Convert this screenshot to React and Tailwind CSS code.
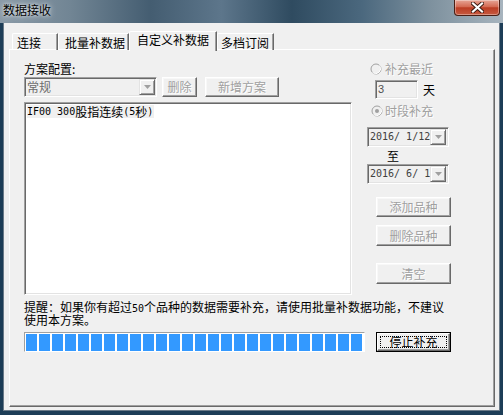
import React from 'react';

const raised =
  'bg-[#f0f0f0] border border-t-white border-l-white border-r-[#696969] border-b-[#696969] shadow-[inset_-1px_-1px_0_#a0a0a0,inset_1px_1px_0_#f8f8f8]';
const sunken =
  'border border-t-[#a0a0a0] border-l-[#a0a0a0] border-r-white border-b-white shadow-[inset_1px_1px_0_#696969,inset_-1px_-1px_0_#e3e3e3]';
const disabledText = 'text-[#a0a0a0] [text-shadow:1px_1px_0_#ffffff]';
const mono = "font-['DejaVu_Sans_Mono',monospace] text-[10px] leading-[12px]";

function DropArrow() {
  return (
    <div className="w-[16px] h-[16px] flex items-center justify-center bg-[#f0f0f0] border border-t-[#e3e3e3] border-l-[#e3e3e3] border-r-[#696969] border-b-[#696969] shadow-[inset_1px_1px_0_#ffffff,inset_-1px_-1px_0_#a0a0a0]">
      <svg width="7" height="4" viewBox="0 0 7 4">
        <path d="M0 0h7L3.5 4z" fill="#a0a0a0" />
      </svg>
    </div>
  );
}

function Radio({ checked }) {
  return (
    <svg width="12" height="12" viewBox="0 0 12 12" className="shrink-0">
      <circle cx="6" cy="6" r="5" fill="#f0f0f0" stroke="#a0a0a0" />
      <path d="M2.6 9.6 A5 5 0 0 0 9.6 2.6" fill="none" stroke="#ffffff" />
      {checked && <circle cx="6" cy="6" r="2" fill="#a0a0a0" />}
    </svg>
  );
}

function Tab({ w, pl, selected, children }) {
  if (selected) {
    return (
      <div
        className={`h-[20px] mb-[-1px] relative z-10 bg-[#f0f0f0] border-t border-l border-t-white border-l-white border-r border-r-[#696969] shadow-[inset_-1px_0_0_#a0a0a0] rounded-tl-[2px] text-[12px] leading-[14px] pt-[1px] ${w} ${pl}`}
      >
        {children}
      </div>
    );
  }
  return (
    <div
      className={`h-[17px] border-t border-l border-t-white border-l-white border-r border-r-[#696969] shadow-[inset_-1px_0_0_#a0a0a0] rounded-tl-[2px] text-[12px] leading-[14px] pt-[2px] ${w} ${pl}`}
    >
      {children}
    </div>
  );
}

function DatePicker({ value }) {
  return (
    <div className={`w-[82px] h-[20px] bg-[#f0f0f0] flex items-center justify-between pl-[2px] pr-[2px] ${sunken}`}>
      <span className={`${mono} text-[#404040] whitespace-pre`}>{value}</span>
      <DropArrow />
    </div>
  );
}

export default function App() {
  const segments = Array.from({ length: 26 });
  return (
    <div className="w-[503px] h-[415px] overflow-hidden flex flex-col bg-[#1d3d57] text-black font-['Noto_Sans_CJK_SC','Noto_Sans',sans-serif]">
      {/* Title bar */}
      <div className="h-[23px] shrink-0 flex items-start justify-between bg-[linear-gradient(90deg,#8a9aa7_0%,#718594_14%,#445d71_30%,#5d768b_44%,#2f4b60_58%,#4b687e_72%,#7f929f_86%,#a7b4be_100%)]">
        <span className="pl-[3px] pt-[3px] text-[12px] leading-[14px] text-black [text-shadow:0_0_6px_rgba(255,255,255,0.85),0_0_3px_rgba(255,255,255,0.7)]">
          数据接收
        </span>
        <div className="mr-[3px] w-[46px] h-[16px] rounded-b-[4px] border border-t-0 border-[#4a1e14] shadow-[inset_0_0_0_1px_rgba(255,255,255,0.35)] bg-[linear-gradient(180deg,#e6a596_0%,#d46a53_45%,#bb3d24_52%,#c65a40_100%)] flex items-center justify-center">
          <svg width="13" height="11" viewBox="0 0 13 11">
            <path d="M2 1.5L11 9.5M11 1.5L2 9.5" stroke="#3a1a12" strokeWidth="4" strokeLinecap="square" />
            <path d="M2 1.5L11 9.5M11 1.5L2 9.5" stroke="#ffffff" strokeWidth="2.2" strokeLinecap="square" />
          </svg>
        </div>
      </div>

      {/* Client area */}
      <div className="mx-[3px] h-[388px] bg-[#f0f0f0] border-x border-b border-[#6a7a88] pt-[7px] pl-[5px] flex flex-col">
        {/* Tabs */}
        <div className="flex items-end h-[20px] pl-[3px] relative z-10">
          <Tab w="w-[46px]" pl="pl-[4px]">连接</Tab>
          <Tab w="w-[71px]" pl="pl-[6px]">批量补数据</Tab>
          <Tab w="w-[88px]" pl="pl-[7px]" selected>
            自定义补数据
          </Tab>
          <Tab w="w-[57px]" pl="pl-[3px]">多档订阅</Tab>
        </div>

        {/* Tab panel */}
        <div className="w-[486px] h-[358px] -mt-[1px] border border-t-white border-l-white border-r-[#696969] border-b-[#696969] shadow-[inset_-1px_-1px_0_#a0a0a0] pl-[14px] pt-[13px] flex flex-col">
          <div className="flex">
            {/* Left column */}
            <div className="w-[328px] flex flex-col">
              <div className="h-[12px] text-[12px] leading-[12px]">方案配置:</div>
              <div className="mt-[2px] h-[20px] flex items-center">
                <div className={`w-[133px] h-[20px] bg-[#f0f0f0] flex items-center justify-between pl-[2px] pr-[1px] ${sunken}`}>
                  <span className="text-[12px] leading-[12px] text-[#6d6d6d]">常规</span>
                  <DropArrow />
                </div>
                <div className={`ml-[5px] w-[35px] h-[20px] flex items-center justify-center text-[12px] leading-[12px] ${raised} ${disabledText}`}>
                  删除
                </div>
                <div className={`ml-[8px] w-[74px] h-[20px] flex items-center justify-center text-[12px] leading-[12px] ${raised} ${disabledText}`}>
                  新增方案
                </div>
              </div>
              <div className={`mt-[5px] h-[193px] bg-white p-[2px] flex flex-col items-start ${sunken}`}>
                <div className="flex items-center h-[13px] bg-[#f0f0f0] pr-[1px] text-[12px] leading-[12px] whitespace-pre">
                  <span className={mono}>IF00 300</span>
                  <span>股指连续</span>
                  <span className={mono}>(5</span>
                  <span>秒</span>
                  <span className={mono}>)</span>
                </div>
              </div>
            </div>

            {/* Right column */}
            <div className="ml-[15px] w-[86px] flex flex-col">
              <div className="ml-[3px] h-[12px] flex items-center gap-[3px] text-[12px] leading-[12px]">
                <Radio />
                <span className={disabledText}>补充最近</span>
              </div>
              <div className="ml-[8px] mt-[5px] h-[19px] flex items-center">
                <div className={`w-[43px] h-[19px] bg-[#f0f0f0] pl-[2px] flex items-center ${sunken}`}>
                  <span className="text-[11px] leading-[11px] text-[#505050] font-['Liberation_Sans',sans-serif]">3</span>
                </div>
                <span className="ml-[5px] text-[12px] leading-[12px]">天</span>
              </div>
              <div className="ml-[4px] mt-[6px] h-[12px] flex items-center gap-[2px] text-[12px] leading-[12px]">
                <Radio checked />
                <span className={disabledText}>时段补充</span>
              </div>
              <div className="mt-[10px]">
                <DatePicker value="2016/ 1/12" />
              </div>
              <div className="ml-[20px] mt-[3px] h-[12px] text-[12px] leading-[12px]">至</div>
              <div className="mt-[2px]">
                <DatePicker value="2016/ 6/ 1" />
              </div>
              <div className={`ml-[9px] mt-[13px] w-[75px] h-[20px] flex items-center justify-center text-[12px] leading-[12px] ${raised} ${disabledText}`}>
                添加品种
              </div>
              <div className={`ml-[9px] mt-[8px] w-[75px] h-[21px] flex items-center justify-center text-[12px] leading-[12px] ${raised} ${disabledText}`}>
                删除品种
              </div>
              <div className={`ml-[9px] mt-[17px] w-[75px] h-[21px] flex items-center justify-center text-[12px] leading-[12px] ${raised} ${disabledText}`}>
                清空
              </div>
            </div>
          </div>

          {/* Reminder */}
          <div className="mt-[5px] flex flex-col text-[12px] leading-[13px]">
            <div className="h-[13px] whitespace-pre">
              提醒：如果你有超过<span className="font-['DejaVu_Sans_Mono',monospace] text-[10px]">50</span>个品种的数据需要补充，请使用批量补数据功能，不建议
            </div>
            <div className="h-[13px]">使用本方案。</div>
          </div>

          {/* Progress + stop */}
          <div className="mt-[6px] flex items-center">
            <div className="w-[341px] h-[20px] bg-white border border-t-[#a0a0a0] border-l-[#a0a0a0] border-r-white border-b-white p-[1px] flex gap-[2px]">
              {segments.map((_, i) => (
                <div key={i} className="w-[11px] h-[17px] bg-[#3399ff]" />
              ))}
            </div>
            <div className="ml-[11px] w-[75px] h-[20px] border border-black">
              <div className="w-full h-full bg-[#f0f0f0] border border-t-white border-l-white border-r-[#696969] border-b-[#696969] shadow-[inset_-1px_-1px_0_#a0a0a0] p-[2px]">
                <div className="w-full h-full border border-dotted border-black flex items-center justify-center text-[12px] leading-[12px]">
                  停止补充
                </div>
              </div>
            </div>
          </div>
        </div>
      </div>
    </div>
  );
}
